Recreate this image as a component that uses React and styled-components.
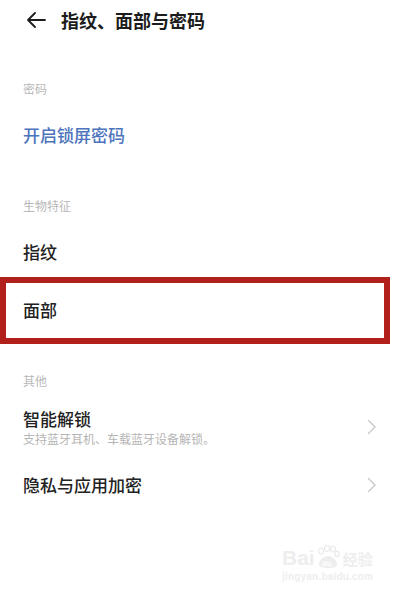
import React from "react";
import styled, { createGlobalStyle } from "styled-components";

const GlobalStyle = createGlobalStyle`
  html, body {
    margin: 0;
    padding: 0;
    background: #ffffff;
  }
  body {
    font-family: "Noto Sans CJK SC", "Noto Sans", sans-serif;
  }
`;

const Screen = styled.div`
  position: relative;
  width: 400px;
  height: 602px;
  background: #ffffff;
  overflow: hidden;
`;

const Header = styled.div`
  display: flex;
  align-items: center;
  gap: 15px;
  height: 24px;
  padding: 8px 0 15px 26px;
`;

const BackButton = styled.button`
  display: flex;
  align-items: center;
  padding: 0;
  border: none;
  background: none;
  color: #1c1c1c;
`;

const Title = styled.h1`
  margin: 0;
  font-size: 18px;
  line-height: 24px;
  font-weight: 700;
  color: #1c1c1c;
`;

const SectionLabel = styled.div`
  padding: 34px 23px 9px;
  font-size: 12px;
  line-height: 16px;
  color: #b8b8b8;
`;

const Row = styled.div`
  position: relative;
  display: flex;
  align-items: center;
  justify-content: space-between;
  height: 58px;
  padding: 0 23px;

  ${(p) =>
    p.$marked &&
    `
    &::after {
      content: "";
      position: absolute;
      top: -4px;
      bottom: -5px;
      left: 0;
      right: 10px;
      border: 6px solid #b1201b;
    }
  `}
`;

const RowText = styled.div`
  display: flex;
  flex-direction: column;
`;

const RowTitle = styled.div`
  font-size: 17px;
  line-height: 22px;
  font-weight: 500;
  color: ${(p) => (p.$link ? "#4d74bd" : "#222222")};
`;

const RowSub = styled.div`
  margin-top: 1px;
  font-size: 12px;
  line-height: 16px;
  color: #b5b5b5;
`;

const Chevron = styled.svg`
  flex: none;
`;

const Watermark = styled.div`
  position: absolute;
  left: 282px;
  top: 545px;
  display: flex;
  flex-direction: column;
  align-items: flex-start;
  color: #eeeeee;
  pointer-events: none;
`;

const MarkTop = styled.div`
  display: flex;
  align-items: flex-end;
  font-family: "Liberation Sans", Arial, sans-serif;
  font-size: 21px;
  line-height: 22px;
  font-weight: 700;
`;

const MarkCn = styled.span`
  margin-left: 2px;
  font-family: "Noto Sans CJK SC", sans-serif;
  font-size: 15px;
  line-height: 20px;
`;

const MarkUrl = styled.div`
  margin-top: 2px;
  font-family: "Liberation Sans", Arial, sans-serif;
  font-size: 10px;
  line-height: 12px;
  font-weight: 700;
  letter-spacing: 0.2px;
`;

const ArrowLeft = () => (
  <svg width="20" height="16" viewBox="0 0 20 16" fill="none">
    <path
      d="M19 8H2M9 1L2 8l7 7"
      stroke="currentColor"
      strokeWidth="1.8"
      strokeLinecap="round"
      strokeLinejoin="round"
    />
  </svg>
);

const ChevronRight = () => (
  <Chevron width="10" height="16" viewBox="0 0 10 16" fill="none">
    <path
      d="M1.5 1.5L8 8l-6.5 6.5"
      stroke="#cccccc"
      strokeWidth="1.5"
      strokeLinecap="round"
      strokeLinejoin="round"
    />
  </Chevron>
);

const Paw = () => (
  <svg width="26" height="24" viewBox="0 0 26 24" fill="none" stroke="#eaeaea" strokeWidth="1.2">
    <ellipse cx="6" cy="6" rx="2.5" ry="3" />
    <ellipse cx="12" cy="3.5" rx="2.5" ry="3" />
    <ellipse cx="18" cy="4" rx="2.5" ry="3" />
    <ellipse cx="22" cy="9" rx="2.2" ry="2.6" />
    <path d="M4 19c0-4 5-8 9-8s9 4 9 8c0 3-3 4-9 4s-9-1-9-4z" fill="#eeeeee" stroke="none" />
    <text x="7" y="21" fontSize="8" fontFamily="Liberation Sans, sans-serif" fontWeight="700" fill="#ffffff" stroke="none">
      du
    </text>
  </svg>
);

const App = () => {
  return (
    <Screen>
      <GlobalStyle />
      <Header>
        <BackButton>
          <ArrowLeft />
        </BackButton>
        <Title>指纹、面部与密码</Title>
      </Header>

      <SectionLabel>密码</SectionLabel>
      <Row>
        <RowTitle $link>开启锁屏密码</RowTitle>
      </Row>

      <SectionLabel>生物特征</SectionLabel>
      <Row>
        <RowTitle>指纹</RowTitle>
      </Row>
      <Row $marked>
        <RowTitle>面部</RowTitle>
      </Row>

      <SectionLabel>其他</SectionLabel>
      <Row>
        <RowText>
          <RowTitle>智能解锁</RowTitle>
          <RowSub>支持蓝牙耳机、车载蓝牙设备解锁。</RowSub>
        </RowText>
        <ChevronRight />
      </Row>
      <Row>
        <RowTitle>隐私与应用加密</RowTitle>
        <ChevronRight />
      </Row>

      <Watermark>
        <MarkTop>
          Bai
          <Paw />
          <MarkCn>经验</MarkCn>
        </MarkTop>
        <MarkUrl>jingyan.baidu.com</MarkUrl>
      </Watermark>
    </Screen>
  );
};

export default App;
